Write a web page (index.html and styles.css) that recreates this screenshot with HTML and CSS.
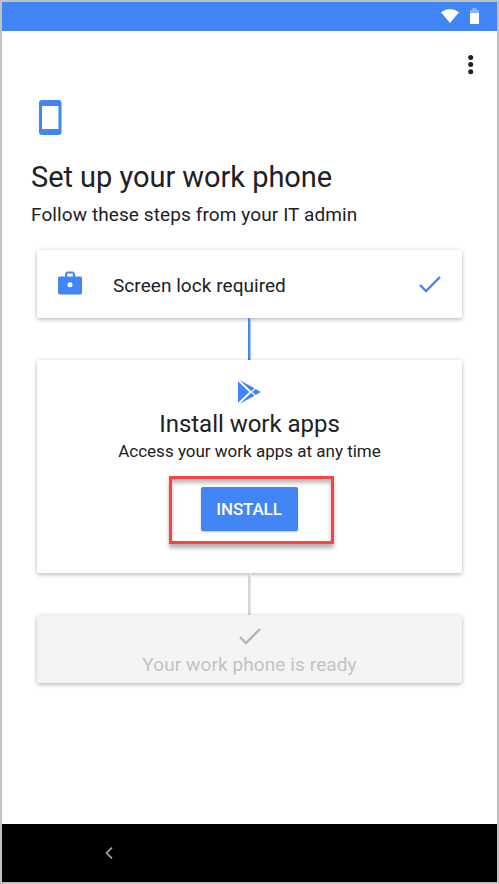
FILE: index.html
```html
<!DOCTYPE html>
<html lang="en">
<head>
<meta charset="utf-8">
<title>Set up your work phone</title>
<link rel="stylesheet" href="styles.css">
</head>
<body>
<div class="phone">
  <header class="status">
    <svg class="wifi" width="20" height="16" viewBox="0 0 20 16"><path d="M1 4.200Q10-2.200 19 4.200L10 15Z" fill="#fff"/></svg>
    <svg class="battery" width="9" height="16" viewBox="0 0 9 16"><path d="M0 2h2.500V0h4v2H9v3H0z" fill="#8db5fa"/><path d="M0 5h9v11H0z" fill="#fff"/></svg>
  </header>
  <main class="content">
    <div class="toolbar">
      <svg width="6" height="20" viewBox="0 0 6 20" fill="#202124"><circle cx="2.700" cy="2.500" r="2.500"/><circle cx="2.700" cy="9.600" r="2.500"/><circle cx="2.700" cy="16.800" r="2.500"/></svg>
    </div>
    <svg class="device" width="23" height="36" viewBox="0 0 23 36"><path fill="#4285f4" fill-rule="evenodd" d="M3 0h16.500a3 3 0 0 1 3 3v29a3 3 0 0 1-3 3H3a3 3 0 0 1-3-3V3a3 3 0 0 1 3-3zm0 6v23h16.500V6z"/></svg>
    <h1 class="title">Set up your work phone</h1>
    <p class="subtitle">Follow these steps from your IT admin</p>
    <div class="steps">
      <section class="card lock">
        <svg class="briefcase" width="24" height="24" viewBox="0 0 24 24"><path fill="#4285f4" fill-rule="evenodd" d="M1.500 5.500H7V2.500l2-2h6l2 2v3h5.500Q24 5.500 24 7v15Q24 23.500 22.500 23.500h-21Q0 23.500 0 22V7Q0 5.500 1.500 5.500zm7.700 0h5.600V2.500H9.200zM12 11.300a2.500 2.500 0 1 0 0 5 2.500 2.500 0 0 0 0-5z"/></svg>
        <p class="lock-text">Screen lock required</p>
        <svg width="22" height="17" viewBox="0 0 22 17"><path d="M1 9l6 6L21 1" fill="none" stroke="#4285f4" stroke-width="2.400"/></svg>
      </section>
      <div class="connector"></div>
      <section class="card install">
        <svg class="play" width="24" height="24" viewBox="0 0 24 24"><g fill="#4285f4"><path d="M1 1.200L12.300 12 1 22.800z"/><path d="M2.500 0L17.500 8.300 14.300 11.200z"/><path d="M2.500 24L17.500 15.700 14.300 12.800z"/><path d="M18.600 8.900L23 11.500v1L18.600 15.100 15.200 12z"/></g></svg>
        <h2 class="install-title">Install work apps</h2>
        <p class="install-text">Access your work apps at any time</p>
        <div class="highlight"><button class="button">INSTALL</button></div>
      </section>
      <div class="connector pending"></div>
      <section class="card ready">
        <svg width="22" height="17" viewBox="0 0 22 17"><path d="M1 9l6 6L21 1" fill="none" stroke="#b5b5b5" stroke-width="2.400"/></svg>
        <p class="ready-text">Your work phone is ready</p>
      </section>
    </div>
  </main>
  <nav class="navbar">
    <svg width="8" height="12" viewBox="0 0 8 12"><path d="M7 .7L1.500 6 7 11.300" fill="none" stroke="#aaa" stroke-width="1.600"/></svg>
  </nav>
</div>
</body>
</html>
```
FILE: styles.css
```css
* { box-sizing: border-box; }
body, h1, h2, p { margin: 0; font-weight: 400; }
svg { display: block; flex: none; }
body { font-family: Roboto, sans-serif; color: #202124; background: #fff; }
.phone { width: 499px; height: 884px; border: 2px solid #c1c1c1; display: flex; flex-direction: column; overflow: hidden; }
.status { height: 29px; flex: none; background: #4285f4; display: flex; justify-content: flex-end; padding: 6px 18px 0 0; gap: 10px; }
.content { flex: 1; }
.toolbar { height: 69px; display: flex; justify-content: flex-end; padding: 24px 23px 0 0; }
.device { margin-left: 37px; }
.title { margin: 21px 0 0 29px; font-size: 29px; line-height: 40px; letter-spacing: -.04px; white-space: nowrap; }
.subtitle { margin: 6px 0 0 29px; font-size: 19px; line-height: 24px; letter-spacing: .1px; white-space: nowrap; }
.steps { width: 425px; margin: 23px 0 0 35px; }
.card { border-radius: 2px; background: #fff; box-shadow: 0 2px 4px rgba(0,0,0,.2), 0 0 5px rgba(0,0,0,.1); }
.lock { height: 68px; display: flex; align-items: center; padding: 0 21px; }
.briefcase { margin-top: -2px; }
.lock-text { margin-left: 31px; flex: 1; font-size: 19px; line-height: 24px; letter-spacing: .05px; margin-top: 3px; }
.connector { width: 3px; height: 42px; margin-left: 211px; background: linear-gradient(90deg, #4285f4 2px, #a8c7fa 2px); }
.connector.pending { background: linear-gradient(90deg, #d5d5d5 2px, #e8e8e8 2px); }
.install { height: 213px; display: flex; flex-direction: column; align-items: center; padding-top: 20px; }
.play { margin-right: 1px; }
.install-title { font-size: 24px; line-height: 32px; margin-top: 4px; letter-spacing: -.03px; }
.install-text { font-size: 17px; line-height: 24px; margin-top: -1px; }
.highlight { width: 165px; height: 68px; margin: 13px 0 0 3px; border: 3px solid #fa4343; padding: 8px 0 0 29px; box-shadow: 0 4px 4px rgba(0,0,0,.3), inset 0 4px 4px rgba(0,0,0,.27); }
.button { display: block; width: 97px; height: 44px; padding: 0; border: 0; border-radius: 2px; background: #4285f4; color: #fff; font: 500 17px Roboto, sans-serif; letter-spacing: -.15px; box-shadow: 0 1px 2px rgba(0,0,0,.25); }
.ready { height: 68px; background: #f4f4f4; display: flex; flex-direction: column; align-items: center; padding-top: 13px; }
.ready-text { margin-top: 8px; font-size: 19px; line-height: 24px; letter-spacing: .1px; color: #c3c3c3; }
.navbar { height: 58px; flex: none; background: #000; display: flex; align-items: center; padding-left: 103px; }
```
